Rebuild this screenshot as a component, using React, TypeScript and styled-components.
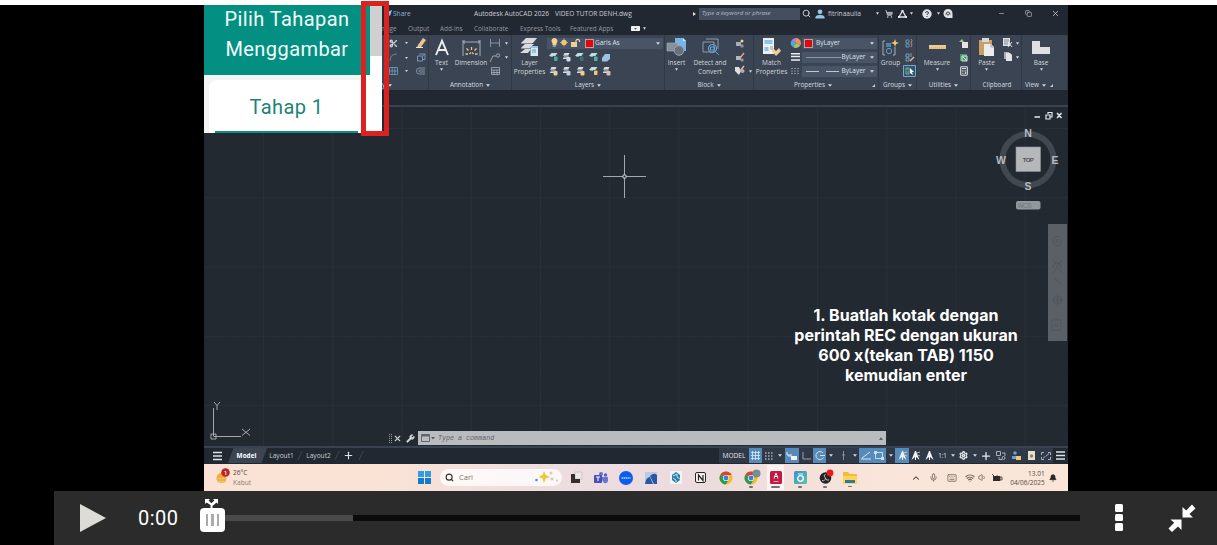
import React from 'react';
import styled, { createGlobalStyle } from 'styled-components';
import {
  Search, Scissors, ShoppingCart, Settings, Wrench, Mic, Keyboard, Wifi, Volume1,
  X, Minus, Plus, Copy, ChevronUp, Bell, Calculator,
} from 'lucide-react';

const GlobalStyle = createGlobalStyle`
  * { box-sizing: border-box; }
  body { margin: 0; background: #fff; font-family: "Open Sans", "Noto Sans", sans-serif; overflow: hidden; }
  svg { display: block; flex: none; overflow: visible; }
`;

const Page = styled.div`
  width: 1217px;
  height: 545px;
  padding-top: 5px;
  position: relative;
  background: linear-gradient(#fff 5px, #000 5px);
`;

const Video = styled.main`
  width: 864px;
  height: 486px;
  margin-left: 204px;
  display: flex;
  flex-direction: column;
  background: #222831;
  color: #c9cdd3;
  font-size: 6.6px;
  line-height: 8px;
  white-space: nowrap;
`;

const Row = styled.div`
  display: flex;
  align-items: center;
`;

const Cell = styled.div<{ $w: number; $align?: string; $bg?: string; $c?: string; $pl?: number; $pr?: number; $size?: number }>`
  width: ${(p) => p.$w}px;
  height: 100%;
  flex: none;
  display: flex;
  align-items: center;
  justify-content: ${(p) => p.$align || 'center'};
  padding-left: ${(p) => p.$pl || 0}px;
  padding-right: ${(p) => p.$pr || 0}px;
  background: ${(p) => p.$bg || 'transparent'};
  color: ${(p) => p.$c || 'inherit'};
  font-size: ${(p) => (p.$size ? `${p.$size}px` : 'inherit')};
`;

const TitleBar = styled(Row)`
  height: 17px;
  flex: none;
`;

const SearchField = styled.div`
  width: 101px;
  height: 12px;
  padding-left: 3px;
  background: #454e5f;
  color: #b5bac3;
  font-style: italic;
  font-size: 6.05px;
  line-height: 11px;
`;

const TabRow = styled(Row)`
  height: 13px;
  flex: none;
  padding-left: 178px;
  color: #9398a1;
  font-size: 6.4px;
`;

const Ribbon = styled.section`
  display: flex;
  height: 55px;
  flex: none;
  background: #3b4452;
`;

const Panel = styled.div<{ $w: number }>`
  width: ${(p) => p.$w}px;
  flex: none;
  display: flex;
  flex-direction: column;
  border-right: 1px solid #313946;
`;

const PanelBody = styled.div<{ $cols: string }>`
  height: 45px;
  padding-top: 1px;
  display: grid;
  grid-template-columns: ${(p) => p.$cols};
`;

const PanelTitle = styled.div<{ $pl?: number; $pr?: number; $start?: boolean }>`
  height: 10px;
  display: flex;
  align-items: center;
  justify-content: ${(p) => (p.$start ? 'flex-start' : 'center')};
  gap: 3px;
  padding: 0 ${(p) => p.$pr || 0}px 0 ${(p) => p.$pl || 0}px;
  color: #d8dbdf;
  font-size: 6.4px;
`;

const Launcher = styled.span<{ $ml: number }>`
  margin-left: ${(p) => p.$ml}px;
`;

const Tool = styled.div`
  display: flex;
  flex-direction: column;
  align-items: center;
  padding-top: 1px;
  min-width: 0;
  text-align: center;
  color: #d3d6db;
  font-size: 6.5px;
  line-height: 8.5px;
`;

const ToolIcon = styled.div`
  height: 20px;
  display: flex;
  align-items: center;
  justify-content: center;
  margin-bottom: 2px;
`;

const Stack = styled.div<{ $top?: number; $ml?: number }>`
  display: flex;
  flex-direction: column;
  align-items: center;
  padding-top: ${(p) => p.$top || 0}px;
  margin-left: ${(p) => p.$ml || 0}px;
`;

const Slot = styled.div`
  height: 14px;
  display: flex;
  align-items: center;
  justify-content: center;
`;

const SelectColumn = styled.div`
  display: flex;
  flex-direction: column;
  gap: 3px;
  padding-top: 1.5px;
`;

const Select = styled.div<{ $pl?: number }>`
  display: flex;
  align-items: center;
  height: 11px;
  padding: 0 3px 0 ${(p) => p.$pl || 4}px;
  background: #4a5467;
  color: #dfe2e6;
  font-size: 6.5px;
`;

const SelectText = styled.span<{ $ml?: number }>`
  flex: 1;
  margin-left: ${(p) => p.$ml || 3}px;
`;

const LinePreview = styled.span<{ $dashed?: boolean }>`
  width: 35px;
  height: 1px;
  background: ${(p) => (p.$dashed ? 'repeating-linear-gradient(90deg,#c3c7cd 0 13px,transparent 13px 20px)' : '#8d95a2')};
`;

const Swatch = styled.span`
  width: 9px;
  height: 9px;
  background: #e00808;
  border: 1px solid #b8a0a4;
`;

const LayerGrid = styled.div`
  display: grid;
  grid-template-columns: repeat(5, 13.3px);
  grid-auto-rows: 14px;
  place-items: center;
  margin-top: -1.5px;
`;

const FileTabs = styled.div`
  height: 17px;
  flex: none;
  border-bottom: 2px solid #3a424e;
`;

const Canvas = styled.section`
  height: 339px;
  flex: none;
  position: relative;
  background-color: #222931;
  background-image:
    linear-gradient(90deg, #282f38 1px, transparent 1px),
    linear-gradient(#282f38 1px, transparent 1px),
    linear-gradient(90deg, #232a33 1px, transparent 1px),
    linear-gradient(#232a33 1px, transparent 1px);
  background-size: 69.25px 69.25px, 69.25px 69.25px, 13.85px 13.85px, 13.85px 13.85px;
  background-position: 59px 21px, 59px 21px, 3.6px 7.2px, 3.6px 7.2px;
`;

const Overlay = styled.div<{ $x: number; $y: number }>`
  position: absolute;
  left: ${(p) => p.$x}px;
  top: ${(p) => p.$y}px;
`;

const Caption = styled(Overlay)`
  width: 240px;
  color: #fff;
  font: 700 16px/20px Inter, sans-serif;
  text-align: center;
  letter-spacing: 0.02px;
`;

const NavPanel = styled(Overlay)`
  width: 19px;
  height: 117px;
  background: #5b6067;
`;

const CommandLine = styled(Overlay)`
  display: flex;
  align-items: center;
  height: 14px;
`;

const CommandInput = styled.div`
  width: 468px;
  height: 14px;
  display: flex;
  align-items: center;
  padding: 0 3px;
  background: #b9bcbf;
  color: #62666b;
  font: italic 6.7px "Liberation Mono", monospace;
  span { flex: 1; margin-left: 3px; }
`;

const StatusBar = styled(Row)`
  height: 18px;
  flex: none;
  border-top: 2px solid #394350;
  padding-bottom: 1px;
`;

const ModelTab = styled.div`
  width: 39px;
  height: 100%;
  display: flex;
  align-items: center;
  justify-content: center;
  padding-right: 2px;
  background: #3c4554;
  clip-path: polygon(14% 0, 100% 0, 86% 100%, 0 100%);
  color: #fff;
  font-size: 6.4px;
  font-weight: 700;
`;

const Taskbar = styled(Row)`
  height: 27px;
  flex: none;
  background: linear-gradient(90deg, #fae3d5 0%, #fae2d5 20%, #ecdce0 45%, #eddcdd 60%, #f9e5d9 78%, #fae5d8 100%);
  color: #54494a;
`;

const WeatherText = styled.div`
  width: 178px;
  font-size: 6.6px;
  line-height: 9.5px;
  div + div { color: #8c7b74; }
`;

const SearchPill = styled.div`
  width: 122px;
  height: 17px;
  margin: 0 0 1px 9px;
  padding: 0 4px 0 5px;
  border-radius: 9px;
  display: flex;
  align-items: center;
  background: linear-gradient(90deg, #fffaf7, #fbf6f8);
  color: #77706f;
  font-size: 7.5px;
  span { flex: 1; margin-left: 5px; }
`;

const AppSlot = styled.div<{ $active?: boolean; $running?: boolean }>`
  width: 24.9px;
  height: 25px;
  display: flex;
  flex-direction: column;
  align-items: center;
  justify-content: center;
  border-radius: 3px;
  background: ${(p) => (p.$active ? 'linear-gradient(90deg,transparent 4px,#fbf3f3 4px 21px,transparent 21px)' : 'none')};
  &::after {
    content: '';
    width: ${(p) => (p.$active ? 9 : 4)}px;
    height: 1.5px;
    margin-top: 2px;
    margin-bottom: -4px;
    border-radius: 1px;
    background: ${(p) => (p.$active || p.$running ? '#786f70' : 'transparent')};
  }
`;

const Clock = styled.div`
  width: 38px;
  text-align: right;
  font-size: 6.5px;
  line-height: 9px;
`;

const StageMenu = styled.aside`
  position: absolute;
  left: 204px;
  top: 5px;
  width: 178px;
  height: 128px;
  background: #fff;
  display: flex;
  font-family: Roboto, sans-serif;
`;

const StageList = styled.div`
  width: 166px;
  height: 100%;
  background: linear-gradient(90deg, #f4f4f4 157px, #fff 157px);
`;

const StageHeading = styled.div`
  height: 70px;
  background: #038f82;
  color: #f3fffc;
  font-size: 20px;
  line-height: 29.5px;
  letter-spacing: 0.42px;
  text-align: center;
`;

const StageCard = styled.div`
  width: 155px;
  height: 53px;
  margin: 5px 0 0 5px;
  border-radius: 8px 0 0 0;
  background: linear-gradient(90deg, transparent 6px, #138d80 6px 149px, transparent 149px) bottom / 100% 2px no-repeat #fff;
  color: #1b8377;
  font-size: 20px;
  line-height: 55px;
  letter-spacing: 0.4px;
  text-align: center;
`;

const ScrollThumb = styled.div`
  width: 12px;
  height: 51px;
  background: #d0d0d0;
`;

const Highlight = styled.div`
  position: absolute;
  left: 361px;
  top: 1px;
  width: 28px;
  height: 135px;
  border: 5px solid #dc2220;
`;

const WindowButtons = styled.div`
  position: absolute;
  left: 1025px;
  top: 9px;
  width: 35px;
  display: flex;
  align-items: center;
  justify-content: space-between;
  color: #cdd1d6;
`;

const Controls = styled.footer`
  height: 54px;
  margin-left: 54px;
  display: flex;
  align-items: center;
  background: #2b2b2b;
  color: #fff;
`;

const Time = styled.div`
  width: 62px;
  margin-left: 32px;
  font: 20px/24px Roboto, sans-serif;
  letter-spacing: 0.5px;
`;

const Track = styled.div`
  position: relative;
  width: 880px;
  height: 6px;
  background: linear-gradient(90deg, #4a4a4a 153px, #0b0b0b 153px);
`;

const Handle = styled.div`
  position: absolute;
  left: 0;
  top: -7px;
  width: 25px;
  height: 24px;
  border-radius: 4px;
  background: #fff;
  display: flex;
  align-items: center;
  justify-content: center;
  gap: 3px;
  i { width: 2.5px; height: 12px; background: #aaa; }
`;

const HandleArrows = styled.div`
  position: absolute;
  left: 5px;
  top: -9px;
`;

const Dots = styled.div`
  width: 8px;
  margin: 0 0 1.2px 35px;
  display: flex;
  flex-direction: column;
  gap: 2px;
  i { height: 7.6px; border-radius: 1.5px; background: #fff; }
`;

const Collapse = styled.div`
  margin-left: 45px;
`;

const Draw = ({ w, h, children }: { w: number; h: number; children: React.ReactNode }) => (
  <svg width={w} height={h} viewBox={`0 0 ${w} ${h}`} fill="none">{children}</svg>
);

const Caret = ({ s = 4, c = '#d5d8dc' }: { s?: number; c?: string }) => (
  <Draw w={s} h={3}><path d={`M0 0.3h${s}L${s / 2} 2.8z`} fill={c} /></Draw>
);

const Slash = () => (
  <Draw w={4} h={9}><path d="M4 0L0 9" stroke="#3b4452" /></Draw>
);

const Sheets = ({ tint = '#d8dadd', badge = '#8eb9cf' }: { tint?: string; badge?: string }) => (
  <Draw w={9} h={10}>
    <path d="M2.5 1h5L6 4H1zM2 4.4h5L5.6 7H.8z" fill={tint} />
    <path d="M1 3.5h5M1 5.5h5" stroke="#69717d" strokeWidth=".5" />
    <rect x="4.5" y="5" width="4" height="4.5" rx="1" fill={badge} />
  </Draw>
);

const FlatSheet = ({ badge }: { badge: string }) => (
  <Draw w={10} h={10}>
    <path d="M2.5 1h6L6.3 4H0z" fill="#bfe0dd" />
    <path d="M1.2 4.5h3" stroke="#79a9ae" />
    <rect x="5" y="4.5" width="3.5" height="4.5" rx=".8" fill={badge} />
  </Draw>
);

const Chrome = () => (
  <Draw w={14} h={14}>
    <circle cx="7" cy="7" r="6.5" fill="#f1bd21" />
    <path d="M7 7L1.4 3.7A6.5 6.5 0 0 1 12.7 4H7z" fill="#d94236" />
    <path d="M7 7L1.4 3.7A6.5 6.5 0 0 0 6.7 13.5L9.8 8.5z" fill="#299a52" />
    <circle cx="7" cy="7" r="3.1" fill="#f3f6f3" /><circle cx="7" cy="7" r="2.4" fill="#3b7de0" />
  </Draw>
);

const Person = ({ c }: { c: string }) => (
  <Draw w={10} h={10}><circle cx="5" cy="2.8" r="2.4" fill={c} /><path d="M.3 9.5c0-3 1.7-3.6 4.7-3.6s4.7.6 4.7 3.6z" fill={c} /></Draw>
);

const CompassLetters = [['N', 29, 6], ['E', 56, 33], ['S', 29, 59.5], ['W', 2, 33]] as const;

const Header = () => (
  <TitleBar>
    <Cell $w={189} $align="flex-end"><Draw w={9} h={7}><path d="M1 3L8 0L6 6L4 4z" fill="#8fc2e8" /></Draw></Cell>
    <Cell $w={81} $align="flex-start" $c="#8fb2d6">Share</Cell>
    <Cell $w={81} $align="flex-start">Autodesk AutoCAD 2026</Cell>
    <Cell $w={134} $align="flex-start">VIDEO TUTOR DENH.dwg</Cell>
    <Cell $w={10}><Draw w={3} h={4}><path d="M0 0L3 2L0 4z" fill="#dfe2e6" /></Draw></Cell>
    <SearchField>Type a keyword or phrase</SearchField>
    <Cell $w={13}><Search size={9} color="#cdd1d6" strokeWidth={2.5} /></Cell>
    <Cell $w={13}><Person c="#94c4ea" /></Cell>
    <Cell $w={48} $align="flex-start" $pl={2}>fitrinaaulia</Cell>
    <Cell $w={7}><Caret s={3} /></Cell>
    <Cell $w={15}><ShoppingCart size={8} color="#cdd1d6" fill="#9aa0a9" /></Cell>
    <Cell $w={12}><Draw w={9} h={8}><path d="M4.5.8L1 7H8z" stroke="#e4e6e9" strokeWidth="1.3" /><path d="M0 6h2v2H0zM7 6h2v2H7zM3.5 0h2v2h-2z" fill="#e4e6e9" /></Draw></Cell>
    <Cell $w={10} $align="flex-start" $pl={1.5}><Caret s={3} /></Cell>
    <Cell $w={18}><Draw w={10} h={10}><circle cx="5" cy="5" r="4.7" fill="#e0e2e5" /><path d="M3.5 4Q3.5 2.6 5 2.6T6.5 4Q6.4 5 5 5.5V6M5 7v1" stroke="#343c48" /></Draw></Cell>
    <Cell $w={4}><Caret s={3} /></Cell>
    <Cell $w={16}><Draw w={10} h={9}><path d="M5 0a4.4 4.4 0 0 1 4.5 4.5V9H5A4.5 4.5 0 0 1 5 0z" fill="#e0e2e5" /><path d="M3 5.8Q3 3 5 3T7 5.8M4 5.8h2" stroke="#343c48" /></Draw></Cell>
    <Cell $w={91}><Minus size={7} color="#cdd1d6" /></Cell>
  </TitleBar>
);

const TabsBar = () => (
  <TabRow>
    <Cell $w={26} $align="flex-start">nage</Cell>
    <Cell $w={32} $align="flex-start">Output</Cell>
    <Cell $w={34} $align="flex-start">Add-ins</Cell>
    <Cell $w={46} $align="flex-start">Collaborate</Cell>
    <Cell $w={50} $align="flex-start">Express Tools</Cell>
    <Cell $w={60} $align="flex-start">Featured Apps</Cell>
    <Cell $w={11}><Draw w={9} h={5}><rect width="9" height="5" rx=".7" fill="#f0f1f3" /><path d="M3 2h3L4.5 3.8z" fill="#596271" /></Draw></Cell>
    <Cell $w={7}><Caret s={3} /></Cell>
  </TabRow>
);

const RibbonBar = () => (
  <Ribbon>
    <Panel $w={225}>
      <PanelBody $cols="178px 22px 22px">
        <span />
        <Stack>
          <Slot><Scissors size={9} color="#d7dade" strokeWidth={3} /></Slot>
          <Slot><Draw w={9} h={9}><path d="M1 8Q1 1 8 1" stroke="#6d7f96" /></Draw></Slot>
          <Slot><Draw w={9} h={8}><path d="M.5 .5h8v7h-8zM3.2 0v8M5.8 0v8M0 4h9" stroke="#6f9cc4" strokeWidth=".8" /></Draw></Slot>
        </Stack>
        <Stack $ml={2}>
          <Slot><Draw w={26} h={10}><path d="M2 4h3L3.5 6z" fill="#d5d8dc" /><path d="M15 7L20 0l3 2L18 9l-4 .5z" fill="#ecc58d" /><path d="M13 9.500h7" stroke="#e8e8e8" /></Draw></Slot>
          <Slot><Draw w={26} h={9}><path d="M2 4h3L3.5 6z" fill="#d5d8dc" /><path d="M14.500 3h5v5h-5zM16 1h6v5.500h-2M19.500 3l2.500-2" stroke="#7395b8" /></Draw></Slot>
          <Slot><Draw w={26} h={8}><path d="M2 3h3L3.5 5z" fill="#d5d8dc" /><path d="M22 1h-6Q13.500 1 13.500 4T16 7h6M22 3h-5Q16 3 16 4t1 1h5" stroke="#8291a5" /></Draw></Slot>
        </Stack>
      </PanelBody>
      <PanelTitle $pl={142}>y <Caret /></PanelTitle>
    </Panel>

    <Panel $w={83}>
      <PanelBody $cols="25px 34px 14px 9px">
        <Tool>
          <ToolIcon><Draw w={14} h={15}><path d="M1 15L7 .8L13 15M3.300 10h7.400" stroke="#eceef0" strokeWidth="1.900" /></Draw></ToolIcon>
          Text<Caret s={3} />
        </Tool>
        <Tool>
          <ToolIcon><Draw w={19} h={17}><path d="M1 1v16M18 1v16M1 3h17M3 1.500L1 3l2 1.500M16 1.500L18 3l-2 1.500" stroke="#a5abb5" /><path d="M9.500 8v3M4.500 9.500l2 2M14.500 9.500l-2 2M3.500 15h2.500M13 15h2.500M7.500 15l1.500-1.500M11.500 15L10 13.500" stroke="#ecc58d" strokeWidth="1.300" /></Draw></ToolIcon>
          Dimension
        </Tool>
        <Stack>
          <Slot><Draw w={10} h={8}><path d="M.5 0v8M9.500 0v8M.5 4h9" stroke="#8392a8" /></Draw></Slot>
          <Slot><Draw w={10} h={9}><path d="M0 9L3 3h3" stroke="#9ca5b3" /><circle cx="8" cy="2.500" r="1.700" stroke="#9ca5b3" /></Draw></Slot>
          <Slot><Draw w={9} h={8}><path d="M.5 .5h8v7h-8zM.5 3h8M3 3v5M6 3v5M.5 5.500h8" stroke="#aab1bc" strokeWidth=".8" /></Draw></Slot>
        </Stack>
        <Stack><Slot><Caret s={3} /></Slot><Slot><Caret s={3} /></Slot></Stack>
      </PanelBody>
      <PanelTitle>Annotation <Caret /></PanelTitle>
    </Panel>

    <Panel $w={153}>
      <PanelBody $cols="35px 116px">
        <Tool>
          <ToolIcon><Draw w={19} h={19}><path d="M6 0h11l-4 5H1zM5 6h9l-4 4H1zM5 11h6l-3 4H0z" fill="#d9dbde" /><path d="M1 5.500h11M1 10.500h9" stroke="#888f99" /><rect x="10.500" y="8" width="7.500" height="10" fill="#d5e7ef" /><path d="M10.500 9h7.500M12 12h4M12 14h4" stroke="#5c9cc9" /></Draw></ToolIcon>
          Layer<br />Properties
        </Tool>
        <SelectColumn>
          <Select>
            <Draw w={34} h={10}><path d="M.5 3.500a3 3 0 1 1 5 1.700V7h-4V5.200z" fill="#f3d592" /><path d="M1.800 8h3" stroke="#e8e8e8" /><circle cx="13" cy="4.500" r="2.700" fill="#efc878" /><path d="M13 0.500v8M9 4.500h8" stroke="#efc878" strokeWidth=".7" /><path d="M20 4h6v5h-6z" fill="#f0cf90" /><path d="M25 4V2.500a2 2 0 0 1 3.500 0V4" stroke="#e7d3ad" strokeWidth="1.200" /></Draw>
            <Swatch />
            <SelectText $ml={1}>Garis As</SelectText>
            <Caret />
          </Select>
          <LayerGrid>
            <FlatSheet badge="#48a8a5" /><Sheets badge="#cfe0ea" /><FlatSheet badge="#406f78" /><FlatSheet badge="#51b2a8" />
            <Draw w={9} h={9}><path d="M3 1h5v5L5 8.500H0V5z" fill="#9ec2dc" /></Draw>
            <Sheets badge="#ead0a1" /><Sheets badge="#b9d3ec" /><Sheets badge="#efcd8a" /><FlatSheet badge="#f1c577" /><Sheets badge="#d7c0ba" />
          </LayerGrid>
        </SelectColumn>
      </PanelBody>
      <PanelTitle>Layers <Caret /></PanelTitle>
    </Panel>

    <Panel $w={89}>
      <PanelBody $cols="23px 44px 15px 7px">
        <Tool>
          <ToolIcon><Draw w={19} h={18}><path d="M8 0h8l3 3v10H8z" fill="#76b5e5" /><path d="M16 0v3h3" fill="#d4e9f7" /><path d="M0 5h11v8H0z" fill="#87909c" stroke="#aab1ba" strokeWidth=".6" /><circle cx="12" cy="12.500" r="4.800" fill="#69717c" stroke="#9ca3ad" /></Draw></ToolIcon>
          Insert<Caret s={3} />
        </Tool>
        <Tool>
          <ToolIcon><Draw w={17} h={18}><path d="M4 1h12v10M1 4h11v10H1z" stroke="#8d9bad" /><circle cx="10.500" cy="10.500" r="4" stroke="#63a7d9" strokeWidth="1.200" /><path d="M13.500 13.500L17 17M8.500 9h4v3h-4z" stroke="#63a7d9" /></Draw></ToolIcon>
          Detect and<br />Convert
        </Tool>
        <Stack>
          <Slot><Draw w={9} h={9}><path d="M1 3h5v4H1z" fill="#a8aeb7" /><circle cx="7" cy="2" r="1.500" fill="#f0d29d" /><circle cx="7" cy="7" r="1.700" fill="#8c949f" /></Draw></Slot>
          <Slot><Draw w={9} h={9}><path d="M1 3h5v4H1z" fill="#b2b8c0" /><path d="M5 5L9 0" stroke="#e9a980" strokeWidth="1.300" /><circle cx="7" cy="7" r="1.700" fill="#8c949f" /></Draw></Slot>
          <Slot><Draw w={10} h={10}><path d="M0 1h4l2 4-2 4L0 5z" fill="#dedfe1" /><path d="M5 5L9 0" stroke="#e9b990" strokeWidth="1.500" /><circle cx="7.500" cy="5" r="2" fill="#a9afb7" /></Draw></Slot>
        </Stack>
        <Stack $top={28}><Slot><Caret s={3} /></Slot></Stack>
      </PanelBody>
      <PanelTitle>Block <Caret /></PanelTitle>
    </Panel>

    <Panel $w={125}>
      <PanelBody $cols="35px 13px 75px">
        <Tool>
          <ToolIcon><Draw w={18} h={18}><path d="M0 0h11v16H0z" fill="#eef0f1" /><path d="M1.500 2h8v4h-8zM1.500 9h4v4h-4z" fill="#8cc3e9" /><path d="M7 9h3M7 11h3" stroke="#9aa0a8" /><path d="M10 10l3 3 3-3 2 3-5 5-4-5z" fill="#efce98" /></Draw></ToolIcon>
          Match<br />Properties
        </Tool>
        <Stack>
          <Slot><Draw w={10} h={10}><path d="M5 5V0A5 5 0 0 1 9.500 7z" fill="#ef9258" /><path d="M5 5L9.500 7A5 5 0 0 1 2 9z" fill="#a2c46a" /><path d="M5 5L2 9A5 5 0 0 1 .5 2.500z" fill="#48b1d9" /><path d="M5 5L.5 2.500A5 5 0 0 1 5 0z" fill="#c57bc5" /></Draw></Slot>
          <Slot><Draw w={9} h={8}><path d="M0 .7h9M0 3.500h9M0 7h9" stroke="#eceef0" strokeWidth="1.500" /></Draw></Slot>
          <Slot><Draw w={9} h={6}><path d="M0 .5h9M0 3h9M0 5.500h9" stroke="#9ba2ad" strokeWidth=".8" strokeDasharray="2 1" /></Draw></Slot>
        </Stack>
        <SelectColumn>
          <Select $pl={2}><Swatch /><SelectText>ByLayer</SelectText><Caret /></Select>
          <Select><LinePreview /><SelectText $ml={0.5}>ByLayer</SelectText><Caret /></Select>
          <Select><LinePreview $dashed /><SelectText $ml={0.5}>ByLayer</SelectText><Caret /></Select>
        </SelectColumn>
      </PanelBody>
      <PanelTitle $start $pl={40}>
        Properties <Caret />
        <Launcher $ml={37}><Draw w={3} h={3}><path d="M0 3h3V0z" fill="#c6cad0" /></Draw></Launcher>
      </PanelTitle>
    </Panel>

    <Panel $w={38}>
      <PanelBody $cols="23px 14px">
        <Tool>
          <ToolIcon><Draw w={17} h={17}><path d="M3 2H1v14h2M11 16h2V8" stroke="#a8aeb8" /><path d="M4 4h5v4H4z" fill="#4d86b1" /><circle cx="7" cy="12" r="2.700" stroke="#6a9cc3" /><path d="M13 0l1 3 3 1-3 1-1 3-1-3-3-1 3-1z" fill="#f5cb78" /></Draw></ToolIcon>
          Group
        </Tool>
        <Stack>
          <Slot><Draw w={9} h={9}><path d="M1 1h3v3H1zM1 5h3v3H1z" stroke="#6796bd" /><path d="M6 0q2 1 0 4q2 2 0 4" stroke="#d18280" /></Draw></Slot>
          <Slot><Draw w={9} h={9}><path d="M1 1h3v3H1zM1 5h3v3H1zM6 0v4" stroke="#7f9ab6" /><path d="M5 8l4-4" stroke="#e1b69c" strokeWidth="1.500" /></Draw></Slot>
          <Slot><Draw w={13} h={12}><path d="M.5 .5h12v11H.5z" fill="#31566c" stroke="#75aace" /><path d="M3 3h3v6H3zM4 4h1M4 7h1" stroke="#79aa9e" /><path d="M7 3l4 4H9l1 3-3-2z" fill="#f3f4f5" /></Draw></Slot>
        </Stack>
      </PanelBody>
      <PanelTitle>Groups <Caret /></PanelTitle>
    </Panel>

    <Panel $w={54}>
      <PanelBody $cols="40px 13px">
        <Tool><ToolIcon><Draw w={17} h={4}><path d="M0 0h17v4H0z" fill="#edcb8c" /><path d="M0 3h17" stroke="#c3a46d" strokeDasharray="1 1" /></Draw></ToolIcon>Measure<Caret s={3} /></Tool>
        <Stack>
          <Slot><Draw w={10} h={9}><path d="M3 3h6v6H3z" fill="#e4e6df" /><path d="M0 3h5L3 0z" fill="#a3c978" /></Draw></Slot>
          <Slot><Draw w={9} h={9}><path d="M1 1h7v7H1z" fill="#449967" /><path d="M3 3h5v5H3z" stroke="#d8eadf" /><path d="M4 4l4 4" stroke="#e9eeee" /></Draw></Slot>
          <Slot><Calculator size={10} color="#e1e3e6" strokeWidth={2.5} /></Slot>
        </Stack>
      </PanelBody>
      <PanelTitle>Utilities <Caret /></PanelTitle>
    </Panel>

    <Panel $w={51}>
      <PanelBody $cols="31px 12px 7px">
        <Tool><ToolIcon><Draw w={16} h={19}><path d="M0 2h13v15H0z" fill="#c9a063" /><path d="M3 0h7v4H3z" fill="#d7d9dc" /><path d="M5 6h7l3 3v9H5z" fill="#ececed" /><path d="M12 6v3h3" stroke="#9fa4aa" /></Draw></ToolIcon>Paste<Caret s={3} /></Tool>
        <Stack>
          <Slot><Draw w={10} h={10}><path d="M0 0h7v8H0z" fill="#dfe1e4" /><path d="M1 2h5M1 4h5M1 6h4" stroke="#6d7581" strokeWidth=".8" /><path d="M5 4l4 5M9 4L5 9" stroke="#dfe1e4" /></Draw></Slot>
          <Slot><Draw w={9} h={10}><path d="M0 0h5v7H0z" fill="#a7adb6" /><path d="M2 1h4l2 2v6H2z" fill="#e4e5e7" /></Draw></Slot>
        </Stack>
        <Stack><Slot><Caret s={3} /></Slot><Slot><Caret s={3} /></Slot></Stack>
      </PanelBody>
      <PanelTitle $pl={2}>Clipboard</PanelTitle>
    </Panel>

    <Panel $w={46}>
      <PanelBody $cols="38px">
        <Tool><ToolIcon><Draw w={18} h={13}><path d="M0 0h8v6h10v7H0z" fill="#dfe0e3" /></Draw></ToolIcon>Base<Caret s={3} /></Tool>
      </PanelBody>
      <PanelTitle $start $pl={3}>
        View <Caret />
        <Launcher $ml={1}><Draw w={3} h={3}><path d="M0 3h3V0z" fill="#c6cad0" /></Draw></Launcher>
      </PanelTitle>
    </Panel>
  </Ribbon>
);

const DrawingArea = () => (
  <Canvas>
    <Overlay $x={829} $y={4}>
      <Draw w={32} h={9}><path d="M1.500 6h5.500M24 2l4.500 5M28.500 2L24 7" stroke="#e7e9ec" strokeWidth="1.500" /><path d="M13 4h4v4h-4zM15 3V1.500h4V6h-1.500" stroke="#e7e9ec" strokeWidth="1.200" /></Draw>
    </Overlay>
    <Overlay $x={399} $y={48}>
      <Draw w={44} h={44}><path d="M0 21.500h20M23 21.500h20M21.500 0v20M21.500 23v20" stroke="#a4a8ad" /><path d="M20 20h3v3h-3z" stroke="#c1c4c8" /></Draw>
    </Overlay>
    <Overlay $x={795} $y={20}>
      <Draw w={60} h={90}>
        <circle cx="29" cy="32.500" r="25.500" stroke="#414851" strokeWidth="6" />
        <rect x="17" y="20" width="24.500" height="24.500" fill="#b5b8bb" stroke="#8d9196" strokeWidth=".6" />
        <rect x="17" y="74" width="24.500" height="8.500" rx="2" fill="#93989e" />
        <g fontFamily="Liberation Sans, sans-serif" textAnchor="middle">
          {CompassLetters.map(([t, x, y]) => (
            <text key={t} x={x} y={y + 3.7} fontSize="10.500" fontWeight="700" fill="#b7bbc0">{t}</text>
          ))}
          <text x="29.200" y="34.800" fontSize="6" fontWeight="700" fill="#52565b" textLength="11">TOP</text>
          <text x="25.500" y="80.700" fontSize="6.500" fill="#6f747a" textLength="14">WCS</text>
        </g>
      </Draw>
    </Overlay>
    <NavPanel $x={844} $y={117}>
      <Draw w={19} h={117}>
        <g stroke="#50565e">
          <circle cx="9.500" cy="17" r="4.500" /><circle cx="9.500" cy="17" r="1.500" />
          <path d="M5 44q0-5 4-5t4 5M5 36l9 13M14 36L5 49M6 54l7 6" />
          <path d="M4 76h11M9.500 70v12M6 73h7v6H6zM4 96h9v10H4z" /><circle cx="8.500" cy="101" r="1.500" />
        </g>
      </Draw>
    </NavPanel>
    <Caption $x={582} $y={198}>
      1. Buatlah kotak dengan<br />perintah REC dengan ukuran<br />600 x(tekan TAB) 1150<br />kemudian enter
    </Caption>
    <Overlay $x={6} $y={291}>
      <Draw w={42} h={42}><path d="M3.500 10v28M3.500 38.500H31M1 36h5v5H1zM4 4l3 3.500L10 4M7 7.500V12M32 31l8 6.500M40 31l-8 6.500" stroke="#b2b6bb" strokeWidth=".9" /></Draw>
    </Overlay>
    <CommandLine $x={184} $y={324}>
      <Cell $w={4}><Draw w={3} h={9}><path d="M.5 0v9M2.500 0v9" stroke="#90969e" strokeDasharray="1 1" /></Draw></Cell>
      <Cell $w={11}><X size={9} color="#c9cdd2" strokeWidth={3} /></Cell>
      <Cell $w={15}><Wrench size={9} color="#cfd2d6" fill="#cfd2d6" /></Cell>
      <CommandInput>
        <Draw w={14} h={8}><path d="M.5 .5h8v7h-8z" stroke="#62676d" /><path d="M.5 1.500h8" stroke="#62676d" strokeWidth="2" /><path d="M10 3h4l-2 2.500z" fill="#555b62" /></Draw>
        <span>Type a command</span>
        <Draw w={4} h={3}><path d="M0 3h4L2 0z" fill="#5f656c" /></Draw>
      </CommandInput>
    </CommandLine>
  </Canvas>
);

const BLUE = '#568ab9';
const DARK = '#303947';

const Status = () => (
  <StatusBar>
    <Cell $w={24} $pl={3}><Draw w={9} h={8}><path d="M0 .5h9M0 4h9M0 7.500h9" stroke="#dfe2e5" strokeWidth="1.300" /></Draw></Cell>
    <ModelTab>Model</ModelTab>
    <Cell $w={29}>Layout1</Cell>
    <Cell $w={8}><Slash /></Cell>
    <Cell $w={29}>Layout2</Cell>
    <Cell $w={8}><Slash /></Cell>
    <Cell $w={15}><Plus size={11} color="#dfe2e5" strokeWidth={2.5} /></Cell>
    <Cell $w={9}><Slash /></Cell>
    <Cell $w={354} />
    <Cell $w={30} $bg={DARK} $c="#e3e5e8">MODEL</Cell>
    <Cell $w={13} $bg={BLUE}><Draw w={9} h={9}><path d="M1.500 0v9M4.500 0v9M7.500 0v9M0 1.500h9M0 4.500h9M0 7.500h9" stroke="#cfe3f3" strokeWidth=".9" /></Draw></Cell>
    <Cell $w={13} $bg={DARK}><Draw w={8} h={8}><path d="M0 1h8M0 4h8M0 7h8" stroke="#aab0b9" strokeDasharray="1.500 1.500" strokeWidth="1.300" /></Draw></Cell>
    <Cell $w={10} $bg={DARK}><Caret /></Cell>
    <Cell $w={14} $bg={BLUE}><Draw w={10} h={8}><path d="M0 0v3h5M1 4h3" stroke="#e2edf6" /><path d="M4 4h6v4H4z" fill="#f0f3f5" /></Draw></Cell>
    <Cell $w={14} $bg={DARK}><Draw w={9} h={8}><path d="M1 0v7h8" stroke="#9ba2ac" /></Draw></Cell>
    <Cell $w={13} $bg={BLUE}><Draw w={10} h={9}><path d="M8.500 6.500A4 4 0 1 1 8 2M5 4.500h5" stroke="#cfe3f3" /></Draw></Cell>
    <Cell $w={10} $bg={DARK}><Caret /></Cell>
    <Cell $w={14} $bg={DARK}><Draw w={3} h={9}><path d="M1.500 0v9M0 4h3" stroke="#868e99" /></Draw></Cell>
    <Cell $w={9} $bg={DARK}><Caret /></Cell>
    <Cell $w={13} $bg={BLUE}><Draw w={10} h={9}><path d="M0 8h10M1 7L9 1" stroke="#d7e7f4" /></Draw></Cell>
    <Cell $w={14} $bg={BLUE}><Draw w={10} h={9}><path d="M1.500 1.500h7v6h-7z" stroke="#c7ddee" /><path d="M0 0h3v3H0zM7 6h3v3H7z" fill="#c7ddee" /></Draw></Cell>
    <Cell $w={9} $bg={DARK}><Caret /></Cell>
    {[BLUE, DARK, DARK].map((bg, i) => (
      <Cell key={i} $w={[14, 13, 14][i]} $bg={bg}>
        <Draw w={9} h={9}><path d="M4 0h1l3.500 9L5 6v3H4V6L.5 9z" fill="#eef2f5" />{i < 2 && <path d="M6 2l3-1M7 4l2 1" stroke="#eef2f5" strokeWidth=".7" />}</Draw>
      </Cell>
    ))}
    <Cell $w={13} $bg={DARK} $size={6.2} $c="#dfe2e5">1:1</Cell>
    <Cell $w={7} $bg={DARK}><Caret /></Cell>
    <Cell $w={14} $bg={DARK}><Settings size={9} color="#e7e9ec" strokeWidth={3.5} /></Cell>
    <Cell $w={9} $bg={DARK}><Caret /></Cell>
    <Cell $w={14} $bg={DARK}><Plus size={12} color="#e7e9ec" strokeWidth={2.5} /></Cell>
    <Cell $w={16} $bg={DARK}><Draw w={10} h={9}><path d="M.5 .5h4v4h-4zM6 2h3v3M3 6v2.500h3" stroke="#a8aeb7" /><circle cx="7.500" cy="7" r="1.500" stroke="#a8aeb7" /></Draw></Cell>
    <Cell $w={15} $bg={DARK}><Draw w={9} h={9}><circle cx="3" cy="2" r="1.800" fill="#6fa1ca" /><path d="M0 8V5h5v3z" fill="#6fa1ca" /><path d="M4 5h5v4H4z" fill="#ebc97a" /></Draw></Cell>
    <Cell $w={14} $bg={DARK}><Draw w={9} h={9}><path d="M1 0h7v9H1z" fill="#e5dfcf" /><circle cx="4.500" cy="5" r="1.700" fill="#9b815b" /></Draw></Cell>
    <Cell $w={15} $bg={DARK}><Draw w={10} h={8}><path d="M.5 3V.5H3M7 .5h2.500V3M9.500 5v2.500H7M3 7.500H.5V5" stroke="#a8aeb7" /><path d="M5 4l3-2.500M2 6.500L4.500 4" stroke="#a8aeb7" /></Draw></Cell>
    <Cell $w={15}><Draw w={9} h={9}><path d="M0 1h9M0 4.500h9M0 8h9" stroke="#dfe2e5" strokeWidth="1.300" /></Draw></Cell>
  </StatusBar>
);

const Apps = () => (
  <>
    <AppSlot><Draw w={11} h={11}><path d="M4 0h7v7H4z" fill="#e9e9e7" stroke="#bab7b5" strokeWidth=".6" /><path d="M0 2h4v5h5v4H0z" fill="#33302f" /></Draw></AppSlot>
    <AppSlot><Draw w={14} h={12}><circle cx="11.500" cy="3" r="1.700" fill="#5360c2" /><circle cx="7" cy="2" r="2" fill="#6670d2" /><path d="M6 5h8v4q-1 3-4 2z" fill="#6a75d2" /><rect y="3" width="8" height="8" rx="1" fill="#4651b2" /><path d="M2 5h4M4 5v4" stroke="#fff" /></Draw></AppSlot>
    <AppSlot><Draw w={14} h={14}><circle cx="7" cy="7" r="7" fill="#0b5cf0" /><path d="M2.500 7h9" stroke="#b9d3ff" strokeWidth="1.500" strokeDasharray="1.500 .5" /></Draw></AppSlot>
    <AppSlot><Draw w={12} h={12}><path d="M0 0h12v12H0z" fill="#b9cce2" /><path d="M0 12Q1 5 5 5l3 7M5 4Q9 0 12 3v9H9z" fill="#2859a2" /></Draw></AppSlot>
    <AppSlot><Draw w={12} h={13}><rect width="12" height="13" rx="1" fill="#eff4f7" /><path d="M6 1L10 4v5l-4 3-4-3V4z" fill="#2e7bac" /><path d="M3 5l4-2v3l3 2M3 7l3 2v2" stroke="#cce8f4" /></Draw></AppSlot>
    <AppSlot><Draw w={11} h={11}><rect x=".5" y=".5" width="10" height="10" rx="1.500" fill="#f4f3f2" stroke="#292626" /><path d="M3.500 8.500V3L8 8.500V3" stroke="#292626" strokeWidth="1.200" /></Draw></AppSlot>
    <AppSlot><Chrome /></AppSlot>
    <AppSlot $running><Draw w={14} h={13}><Chrome /><circle cx="12.500" cy="2.500" r="4" fill="#7a8d93" /></Draw></AppSlot>
    <AppSlot $active><Draw w={12} h={13}><rect width="12" height="13" rx="1.500" fill="#c31944" /><path d="M4 7.500L6 2l2 5.500M4.700 5.500h2.600" stroke="#fff" /><path d="M3.500 10.500h5" stroke="#e7a8b7" /></Draw></AppSlot>
    <AppSlot $running><Draw w={13} h={13}><defs><linearGradient id="shot" x2="1" y2="1"><stop stopColor="#3f8fd8" /><stop offset="1" stopColor="#5bc5a2" /></linearGradient></defs><rect width="13" height="13" rx="1.500" fill="url(#shot)" /><circle cx="6.500" cy="7.500" r="2.800" stroke="#fff" strokeWidth="1.300" /><path d="M4 3h5" stroke="#dff3f1" /></Draw></AppSlot>
    <AppSlot $running><Draw w={13} h={13}><circle cx="6.500" cy="7" r="5.800" fill="#242326" /><path d="M6.500 3q-3 2 0 4M10 9q-3 1-3.500-2M3 9.500q3 1 3.500-2.500" stroke="#b9b9bb" /><circle cx="11" cy="2" r="3.400" fill="#ef1717" /></Draw></AppSlot>
    <AppSlot $running><Draw w={14} h={12}><path d="M0 0h5l1.500 2H14v9H0z" fill="#f2bd36" /><path d="M0 4h14v8H0z" fill="#ffd45e" /><path d="M2 8h10v3H2z" fill="#277ca9" /></Draw></AppSlot>
  </>
);

const TaskbarRow = () => (
  <Taskbar>
    <Cell $w={29} $align="flex-end" $pr={3}>
      <Draw w={15} h={15}><circle cx="6.500" cy="8" r="5" fill="#f3ad36" /><path d="M1 8.500h9M2 11.500h9" stroke="#e9c46d" strokeWidth="1.500" /><circle cx="10.500" cy="2.500" r="4.300" fill="#b52c25" /><path d="M9.500 1.500h1.300v3.500" stroke="#f5dcd7" /></Draw>
    </Cell>
    <WeatherText><div>26°C</div><div>Kabut</div></WeatherText>
    <Cell $w={20} $align="flex-end"><Draw w={13} h={13}><path d="M0 0h6v6H0zM7 0h6v6H7z" fill="#2c9fe1" /><path d="M0 7h6v6H0zM7 7h6v6H7z" fill="#147bcb" /></Draw></Cell>
    <SearchPill>
      <Search size={9} color="#35302f" strokeWidth={3} />
      <span>Cari</span>
      <Draw w={23} h={12}><path d="M9 0l1.700 4L15 6l-4.300 1.500L9 12 7.500 7.500 3.500 6l4-2z" fill="#f0c537" /><circle cx="1.500" cy="9" r="1.300" fill="#4d8fd5" /><circle cx="16" cy="2" r="1.500" fill="#e3cba5" /><circle cx="17" cy="8" r="1.500" fill="#d8c9a0" /><circle cx="22" cy="9.500" r="1" fill="#d9b7ba" /></Draw>
    </SearchPill>
    <Cell $w={2} />
    <Apps />
    <Cell $w={44} />
    <Cell $w={18}><ChevronUp size={10} color="#403a39" strokeWidth={2.5} /></Cell>
    <Cell $w={18}><Mic size={9} color="#655b58" /></Cell>
    <Cell $w={18}><Keyboard size={10} color="#786b66" /></Cell>
    <Cell $w={18}><Wifi size={10} color="#655b58" strokeWidth={2.5} /></Cell>
    <Cell $w={8}><Volume1 size={9} color="#655b58" /></Cell>
    <Cell $w={20}><Draw w={10} h={8}><path d="M1 2h7v5H1z" fill="#302b2a" /><path d="M8 3h2v3H8zM0 0l4 4M5 1v3" stroke="#302b2a" strokeWidth=".8" /></Draw></Cell>
    <Clock>13.01<br />04/06/2025</Clock>
    <Cell $w={17}><Bell size={8} color="#292524" fill="#292524" /></Cell>
  </Taskbar>
);

const Player = () => (
  <Controls>
    <Draw w={52} h={28}><path d="M26 0v28L52 14z" fill="#dddcd6" /></Draw>
    <Time>0:00</Time>
    <Track>
      <Handle><i /><i /><i />
        <HandleArrows>
          <Draw w={13} h={9}>
            <path d="M0 0h5L3.600 1.500 6.300 4.200 9.400 1.500 8 0h5v5l-1.500-1.500L7.500 7v2h-2V6L1.500 3.500 0 5z" fill="#fff" />
          </Draw>
        </HandleArrows>
      </Handle>
    </Track>
    <Dots><i /><i /><i /></Dots>
    <Collapse>
      <Draw w={28} h={28}><path d="M14.500 3v10.500H25L21.500 10 27.500 4.500 24 .5 18.200 6.500zM2.500 15.500H13.500V26L10 22.500 4 28 .5 24.500 6.200 18.700z" fill="#fff" /></Draw>
    </Collapse>
  </Controls>
);

export default function App() {
  return (
    <>
      <GlobalStyle />
      <Page>
        <Video>
          <Header />
          <TabsBar />
          <RibbonBar />
          <FileTabs />
          <DrawingArea />
          <Status />
          <TaskbarRow />
        </Video>
        <WindowButtons><Copy size={7} /><X size={9} /></WindowButtons>
        <StageMenu>
          <StageList>
            <StageHeading>Pilih Tahapan<br />Menggambar</StageHeading>
            <StageCard>Tahap 1</StageCard>
          </StageList>
          <ScrollThumb />
        </StageMenu>
        <Highlight />
        <Player />
      </Page>
    </>
  );
}
